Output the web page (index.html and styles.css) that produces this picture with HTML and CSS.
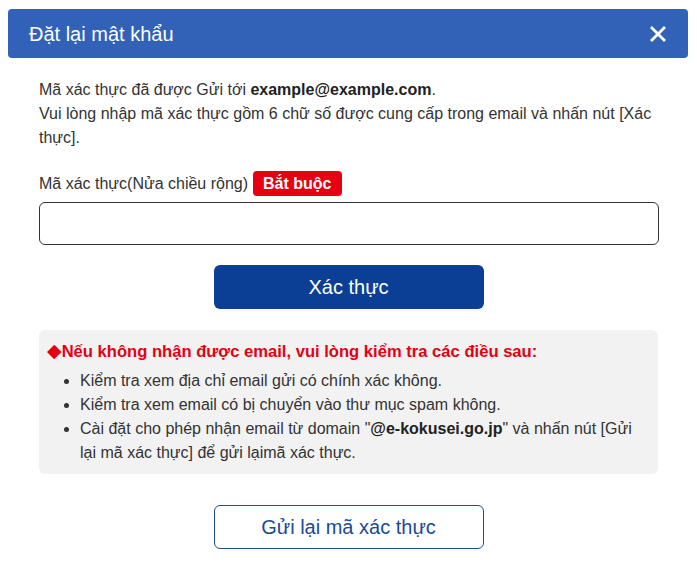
FILE: index.html
```html
<!DOCTYPE html>
<html lang="vi">
<head>
<meta charset="utf-8">
<title>Đặt lại mật khẩu</title>
<link rel="stylesheet" href="styles.css">
</head>
<body>
<div class="dialog">
  <div class="dialog-header">
    <h1 class="dialog-title">Đặt lại mật khẩu</h1>
    <button class="close-btn" aria-label="Đóng">
      <svg width="16" height="16" viewBox="0 0 16 16"><path d="M2 2L14 14M14 2L2 14" stroke="#fff" stroke-width="2.8" stroke-linecap="square"/></svg>
    </button>
  </div>
  <div class="dialog-body">
    <p class="intro">Mã xác thực đã được Gửi tới <b>example@example.com</b>.<br>Vui lòng nhập mã xác thực gồm 6 chữ số được cung cấp trong email và nhấn nút [Xác thực].</p>
    <div class="label-row">
      <span class="label">Mã xác thực(Nửa chiều rộng)</span>
      <span class="badge">Bắt buộc</span>
    </div>
    <input class="code-input" type="text">
    <div class="btn-row">
      <button class="btn-primary">Xác thực</button>
    </div>
    <div class="notice">
      <p class="notice-title"><span class="diamond">◆</span>Nếu không nhận được email, vui lòng kiểm tra các điều sau:</p>
      <ul class="notice-list">
        <li>Kiểm tra xem địa chỉ email gửi có chính xác không.</li>
        <li>Kiểm tra xem email có bị chuyển vào thư mục spam không.</li>
        <li>Cài đặt cho phép nhận email từ domain "<b>@e-kokusei.go.jp</b>" và nhấn nút [Gửi lại mã xác thực] để gửi lạimã xác thực.</li>
      </ul>
    </div>
    <div class="btn-row resend-row">
      <button class="btn-secondary">Gửi lại mã xác thực</button>
    </div>
  </div>
</div>
</body>
</html>
```
FILE: styles.css
```css
* { box-sizing: border-box; }
html, body { margin: 0; padding: 0; background: #fff; }
body {
  font-family: "Liberation Sans", Arial, sans-serif;
  color: #333;
  font-size: 16px;
  line-height: 24px;
}
.dialog { padding: 9px 9px 0 8px; }
.dialog-header {
  height: 49px;
  background: #3162b8;
  border-radius: 4px;
  display: flex;
  align-items: center;
  justify-content: space-between;
  padding: 0 22px 0 21px;
}
.dialog-title {
  margin: 0;
  font-size: 20px;
  font-weight: normal;
  color: #fff;
  line-height: 24px;
}
.close-btn {
  background: none;
  border: none;
  padding: 0;
  width: 16px;
  height: 16px;
  display: flex;
}
.dialog-body { padding: 20px 30px 0 31px; }
.intro { margin: 0; }
.intro b { color: #222; }
.label-row {
  margin-top: 21px;
  display: flex;
  align-items: center;
  height: 25px;
}
.badge {
  margin-left: 5px;
  background: #e60012;
  color: #fff;
  font-weight: bold;
  border-radius: 4px;
  height: 25px;
  line-height: 25px;
  padding: 0 10px;
}
.code-input {
  display: block;
  margin-top: 6px;
  width: 620px;
  height: 43px;
  border: 1px solid #333;
  border-radius: 6px;
  font: inherit;
  padding: 0 10px;
}
.btn-row { display: flex; justify-content: center; margin-top: 20px; }
.btn-primary, .btn-secondary {
  width: 270px;
  height: 44px;
  border-radius: 6px;
  font-family: "Liberation Sans", Arial, sans-serif;
  font-size: 20px;
}
.btn-primary {
  background: #0b3f96;
  color: #fff;
  border: none;
}
.notice {
  margin-top: 21px;
  background: #f2f2f2;
  border-radius: 6px;
  padding: 10px 8px 9px 8px;
}
.notice-title {
  margin: 0;
  color: #e60012;
  font-weight: bold;
  font-size: 16.6px;
}
.diamond {
  font-family: "DejaVu Sans", sans-serif;
  font-size: 19px;
  font-weight: normal;
  line-height: 20px;
}
.notice-list {
  margin: 5px 0 0 0;
  padding-left: 33px;
}
.notice-list b { color: #222; }
.resend-row { margin-top: 31px; }
.btn-secondary {
  background: #fff;
  color: #1a4a98;
  border: 1px solid #1a4a98;
}
```
